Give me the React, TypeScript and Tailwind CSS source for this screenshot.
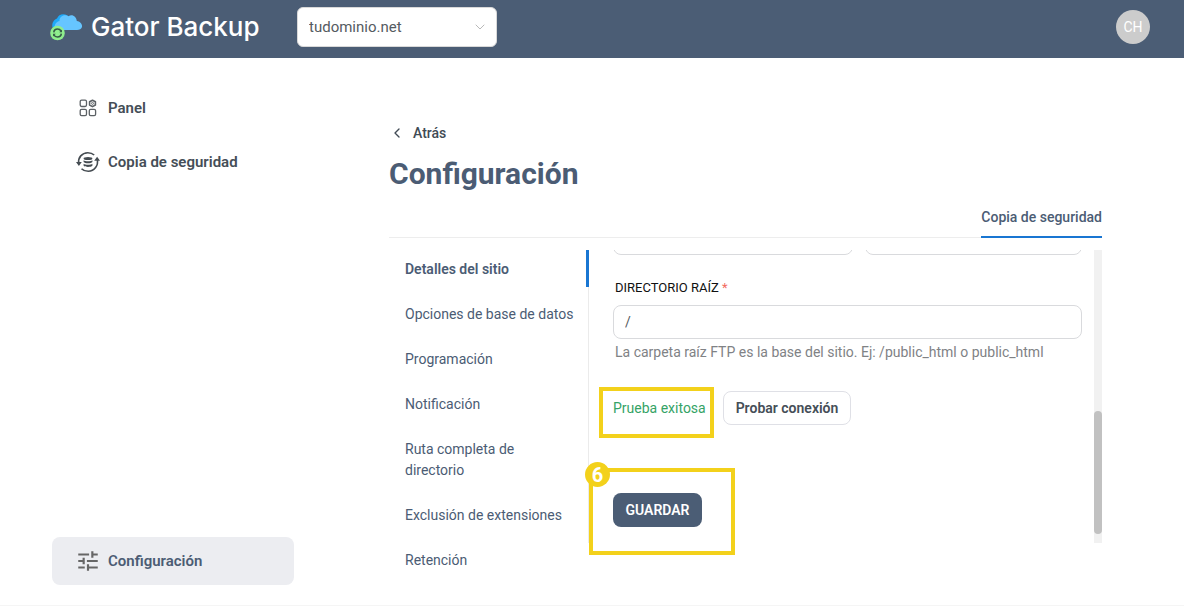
import React from "react";
import { MdTune } from "react-icons/md";
import { ChevronDown, ChevronLeft } from "lucide-react";

function LogoMark() {
  return (
    <svg width="33" height="28" viewBox="0 0 33 28" aria-hidden="true">
      <path d="M2.4 14C1.6 10 4 6.5 7 5.5C8.5 1.2 13.5 0 17.5 2.5L21 6L12 17H6Z" fill="#1fa9f8" />
      <path d="M5 17C3.5 12 6.5 8.5 9.5 8C9 3.5 14.5 0.5 18.5 3.2C22.5 0.8 26.5 4 26.8 8C30.5 8.6 32.6 11.6 32 14C31.4 16 29.5 17 27 17Z" fill="#66c5ff" />
      <circle cx="7.5" cy="20" r="7.3" fill="#8fee8d" />
      <g fill="none" stroke="#355a46" strokeWidth="1.6">
        <path d="M3.8 19.4C4 17.2 5.6 16 7.6 16C9.2 16 10.4 16.8 11 18" />
        <path d="M11.3 20.6C11.1 22.8 9.4 24 7.4 24C5.8 24 4.6 23.2 4 22" />
      </g>
      <path d="M12 16.6V19.2H9.2ZM3 23.4V20.8H5.8Z" fill="#355a46" />
    </svg>
  );
}

function PanelIcon() {
  return (
    <svg width="24" height="24" viewBox="0 0 24 24" fill="none" stroke="#5c6165" strokeWidth="1.3" aria-hidden="true">
      <rect x="4.2" y="4.2" width="6.3" height="6.3" rx="1.4" />
      <rect x="4.2" y="13.3" width="6.3" height="6.3" rx="1.4" />
      <rect x="13.3" y="13.3" width="6.3" height="6.3" rx="1.4" />
      <path d="M16.5 4.2L19.4 5.8V9L16.5 10.6L13.6 9V5.8Z" strokeWidth="1.6" strokeLinejoin="round" />
      <circle cx="16.5" cy="7.4" r="1" strokeWidth="0.9" />
    </svg>
  );
}

function BackupIcon() {
  return (
    <svg width="24" height="24" viewBox="0 0 24 24" fill="none" stroke="#454c52" strokeWidth="1.6" aria-hidden="true">
      <path d="M2.7 13.5C1.8 7.5 6 2.8 11.8 2.7C14.4 2.7 16.6 3.5 18.2 5" />
      <path d="M21.3 9C22.6 15.5 18.5 21.2 12.2 21.3C9.4 21.3 7.2 20.4 5.5 18.7" />
      <path d="M0 12H5.8L2.9 16ZM18.2 10.8H24L21.1 6.8Z" fill="#454c52" stroke="none" />
      <g fill="#454c52" stroke="none">
        <ellipse cx="12" cy="8.4" rx="4.4" ry="1.5" />
        <path d="M7.6 10.2C9 11.6 15 11.6 16.4 10.2V12C15 13.7 9 13.7 7.6 12Z" />
        <path d="M7.6 13.7C9 15.1 15 15.1 16.4 13.7V15.7C15 17.3 9 17.3 7.6 15.7Z" />
      </g>
    </svg>
  );
}

const sections = [
  "Opciones de base de datos",
  "Programación",
  "Notificación",
  "Ruta completa de directorio",
  "Exclusión de extensiones",
  "Retención",
];

export default function App() {
  return (
    <div className="flex min-h-screen flex-col bg-white font-['Roboto',sans-serif] text-sm text-[#4b5c74]">
      <header className="flex h-[58px] items-center bg-[#4b5d75] pr-[34px] pb-1 pl-[50px]">
        <a href="#inicio" className="flex w-[247px] shrink-0 items-center gap-2 text-white">
          <LogoMark />
          <span className="font-['Inter',sans-serif] text-[26px] leading-8 font-medium whitespace-nowrap">Gator Backup</span>
        </a>
        <div className="relative w-[200px]">
          <select
            aria-label="Dominio"
            className="h-10 w-full appearance-none rounded-md border border-[#d9d9d9] bg-white px-[11px] pt-0.5 text-[15px] text-[#555b61]"
          >
            <option>tudominio.net</option>
          </select>
          <ChevronDown size={16} strokeWidth={1.5} className="pointer-events-none absolute top-3 right-[9px] text-[#b9b9b9]" />
        </div>
        <button type="button" className="ml-auto size-[34px] rounded-full bg-[#cccccc] text-sm text-white">
          CH
        </button>
      </header>

      <div className="flex flex-1 border-b border-[#f5f5f5] pr-[82px] pl-[52px]">
        <nav aria-label="Principal" className="flex w-[242px] shrink-0 flex-col gap-1.5 pt-[26px] pb-5 text-[15px] font-semibold text-[#454e57]">
          <a href="#panel" className="flex h-12 items-center gap-2 px-6">
            <PanelIcon />
            <span className="pt-0.5">Panel</span>
          </a>
          <a href="#copia" className="flex h-12 items-center gap-2 px-6">
            <BackupIcon />
            <span className="pt-0.5">Copia de seguridad</span>
          </a>
          <a href="#configuracion" className="mt-auto flex h-12 items-center gap-[7px] rounded-lg bg-[#ecedf1] px-[23px] text-[#4b5c74]">
            <MdTune size={26} color="#666666" />
            <span className="pt-0.5">Configuración</span>
          </a>
        </nav>

        <main className="ml-[95px] min-w-0 flex-1 pt-16">
          <a href="#atras" className="flex h-[22px] items-center gap-2 font-medium text-[#414b55]">
            <ChevronLeft size={16} />
            Atrás
          </a>
          <h1 className="mt-3 text-[30px] leading-9 font-bold">Configuración</h1>
          <div className="mt-3 flex h-[34px] justify-end shadow-[inset_0_-1px_0_#ededed]">
            <a href="#copia-tab" className="border-b-2 border-[#1976d2] pt-[3px] font-medium whitespace-nowrap">
              Copia de seguridad
            </a>
          </div>

          <div className="mt-3 flex h-[293px]">
            <nav aria-label="Secciones" className="flex w-[200px] shrink-0 flex-col gap-2 border-r border-[#ebebeb] leading-[21px]">
              <a href="#detalles" className="-mr-px border-r-[3px] border-[#1976d2] pt-[9px] pb-[7px] pl-4 font-semibold">
                Detalles del sitio
              </a>
              {sections.map((name) => (
                <a key={name} href="#seccion" className="pt-[9px] pr-3 pb-[7px] pl-4">
                  {name}
                </a>
              ))}
            </nav>

            <form className="min-w-0 flex-1 pr-3 pl-6">
              <div className="flex h-[5px] items-end gap-3 overflow-hidden">
                <input aria-label="Servidor" className="h-[34px] min-w-0 flex-[240] rounded-lg border border-[#d9dadd]" />
                <input aria-label="Puerto" className="h-[34px] min-w-0 flex-[217] rounded-lg border border-[#d9dadd]" />
              </div>
              <label htmlFor="root" className="mt-[23px] block pl-0.5 text-[13px] leading-5 text-[#111111]">
                DIRECTORIO RAÍZ <span className="text-[#f26b5e]">*</span>
              </label>
              <input
                id="root"
                defaultValue="/"
                className="mt-[7px] block h-[34px] w-full rounded-lg border border-[#d9dadd] px-[11px] text-[#555b61]"
              />
              <p className="mt-[3px] pl-0.5 leading-5 text-[#808285]">
                La carpeta raíz FTP es la base del sitio. Ej: /public_html o public_html
              </p>
              <div className="mt-[29px] flex items-center">
                <div className="relative w-[110px]">
                  <span className="text-[#35a366]">Prueba exitosa</span>
                  <div className="pointer-events-none absolute -top-[11px] right-[9px] -left-3.5 h-[51px] border-4 border-[#f3d11b]" />
                </div>
                <button type="button" className="h-[34px] w-32 rounded-lg border border-[#dfe0e6] font-semibold whitespace-nowrap text-[#454e57]">
                  Probar conexión
                </button>
              </div>
              <div className="relative mt-[68px] w-[89px]">
                <button type="submit" className="h-[34px] w-full rounded-lg bg-[#4b5d75] font-semibold text-white">
                  GUARDAR
                </button>
                <div className="pointer-events-none absolute -top-[25px] -right-[33px] -bottom-7 -left-6 border-4 border-[#f3d11b]">
                  <span className="absolute -top-2.5 -left-2 flex size-[25px] items-center justify-center rounded-full bg-[#f3d11b] text-xl font-bold text-white">
                    6
                  </span>
                </div>
              </div>
            </form>
            <div className="w-2 shrink-0 bg-[#f1f1f1] pt-[161px]">
              <div className="h-[123px] rounded-full bg-[#c1c1c1]" />
            </div>
          </div>
        </main>
      </div>
    </div>
  );
}
